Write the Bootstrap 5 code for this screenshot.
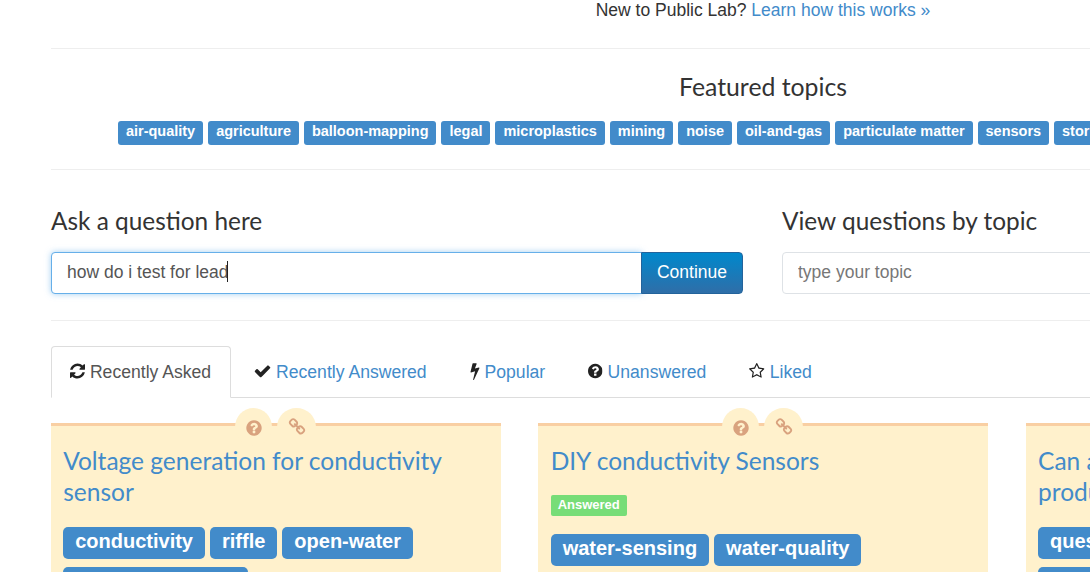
<!DOCTYPE html>
<html lang="en">
<head>
    <meta charset="UTF-8">
    <title>Questions | Public Lab</title>
    <link href="https://cdn.jsdelivr.net/npm/bootstrap@5.3.0/dist/css/bootstrap.min.css" rel="stylesheet">
    <style>
        html, body {
            overflow: hidden;
            height: 572px;
        }
        body {
            font-family: "Liberation Sans", sans-serif;
            font-size: 17.5px;
            color: #333;
        }
        a { text-decoration: none; color: #428bca; }
        .page-wrap {
            width: 1424px;
            margin-left: 51px;
        }
        .intro-line {
            height: 49px;
            line-height: 21px;
            border-bottom: 1px solid #eee;
        }
        .heading-font {
            font-family: Lato, sans-serif;
            font-weight: 400;
            color: #333;
        }
        .featured-block {
            height: 121px;
            padding-top: 24px;
            border-bottom: 1px solid #eee;
        }
        .featured-block h4 {
            font-size: 24.8px;
            line-height: 28px;
            margin-bottom: 20px;
        }
        .topic-tag {
            background: #428bca;
            color: #fff;
            font-weight: 700;
            font-size: 14.47px;
            line-height: 20px;
            height: 24px;
            padding: 0 8px;
            border-radius: 3px;
            white-space: nowrap;
        }
        .tag-row { padding-left: 67px; gap: 5px; }
        .ask-block {
            height: 151px;
            padding-top: 36px;
            border-bottom: 1px solid #eee;
        }
        .ask-block h4 {
            font-size: 24.4px;
            line-height: 30px;
            margin-bottom: 16px;
        }
        .ask-col { width: 692px; }
        .topic-col { margin-left: 39px; width: 693px; }
        .ask-input, .topic-input {
            height: 42px;
            font-size: 17.5px;
            padding: 5px 15px 7px;
            color: #555;
            border-radius: 4px;
        }
        .ask-input {
            border-color: #66afe9;
            box-shadow: 0 0 6px rgba(102, 175, 233, .6);
            position: relative;
        }
        .topic-input::placeholder { color: #777; }
        .caret-bar {
            position: absolute;
            left: 177px;
            top: 9px;
            width: 1px;
            height: 21px;
            background: #222;
            z-index: 6;
        }
        .btn-continue {
            width: 102px;
            height: 42px;
            font-size: 17.5px;
            padding: 5px 12px 7px;
            color: #fff;
            background: linear-gradient(#0088cc, #2f6ea8);
            border: 1px solid #23639b;
            border-radius: 0 4px 4px 0;
        }
        .q-tabs { margin-top: 25px; border-bottom: 1px solid #ddd; }
        .q-tabs .nav-link {
            height: 52px;
            padding: 13px 19px 15px 18px;
            line-height: 24px;
            color: #428bca;
            font-size: 17.6px;
            border-radius: 4px 4px 0 0;
            border: 1px solid transparent;
            margin-right: 4px;
            margin-bottom: -1px;
        }
        .q-tabs .nav-link.active {
            color: #555;
            border-color: #ddd #ddd #fff;
            background: #fff;
        }
        .fa-ico {
            display: inline-block;
            height: 18px;
            fill: #222;
            vertical-align: -2px;
        }
        .ico-refresh { width: 15px; }
        .ico-question { width: 14.5px; }
        .ico-check { width: 17px; }
        .ico-bolt { width: 10px; }
        .ico-star { width: 15.5px; }
        .card-grid {
            width: 1462px;
            margin-top: 25px;
            gap: 37.45px;
        }
        .q-card {
            position: relative;
            width: 450px;
            flex: none;
            height: 300px;
            padding: 19px 12px 19px 12.2px;
            background: #fff1cc;
            border-top: 3px solid #f9cfa3;
        }
        .q-bubbles {
            position: absolute;
            top: -18px;
            left: 0;
            right: 1px;
            gap: 5px;
        }
        .q-bubble {
            width: 37px;
            height: 38px;
            border-radius: 50%;
            background: #fff1cc;
            padding-top: 11px;
        }
        .q-bubble svg {
            width: 16px;
            height: 18px;
            fill: #d9a27e;
            display: block;
            margin: 0 auto;
        }
        .q-bubble.link-one { width: 39px; padding-top: 10px; }
        .q-bubble.link-one svg { width: 18px; height: 18px; }
        .q-title {
            font-family: Lato, sans-serif;
            font-size: 24.5px;
            line-height: 31px;
            font-weight: 400;
            margin-bottom: 20px;
        }
        .q-title a { color: #428bca; }
        .answered-flag {
            display: block;
            width: fit-content;
            background: #77dd77;
            color: #fff;
            font-weight: 700;
            font-size: 13px;
            line-height: 20px;
            height: 21px;
            padding: 0 7px;
            border-radius: 2px;
            margin-top: -1px;
            margin-bottom: 18px;
        }
        .q-tag {
            background: #428bca;
            color: #fff;
            font-weight: 700;
            font-size: 20px;
            line-height: 28px;
            height: 32px;
            padding: 0 12px;
            border-radius: 5px;
            white-space: nowrap;
        }
        .q-tags { gap: 8px 5px; }
    </style>
</head>
<body>
    <svg class="d-none">
        <symbol id="i-refresh" viewBox="128 0 1536 1792"><path d="M1639 1056q0 5-1 7-64 268-268 434.5t-478 166.5q-146 0-282.5-55t-243.5-157l-129 129q-19 19-45 19t-45-19-19-45v-448q0-26 19-45t45-19h448q26 0 45 19t19 45-19 45l-137 137q71 66 161 102t187 36q134 0 250-65t186-179q11-17 53-117 8-23 30-23h192q13 0 22.5 9.5t9.5 22.5zm25-800v448q0 26-19 45t-45 19h-448q-26 0-45-19t-19-45 19-45l138-138q-148-137-349-137-134 0-250 65t-186 179q-11 17-53 117-8 23-30 23h-199q-13 0-22.5-9.5t-9.5-22.5v-7q65-268 270-434.5t480-166.5q146 0 284 55.5t245 156.5l130-129q19-19 45-19t45 19 19 45z"/></symbol>
        <symbol id="i-check" viewBox="96 0 1600 1792"><path d="M1671 566q0 40-28 68l-724 724-136 136q-28 28-68 28t-68-28l-136-136-362-362q-28-28-28-68t28-68l136-136q28-28 68-28t68 28l294 295 656-657q28-28 68-28t68 28l136 136q28 28 28 68z"/></symbol>
        <symbol id="i-bolt" viewBox="400 0 1000 1792"><path d="M1333 566q18 20 7 44l-540 1157q-13 25-42 25-4 0-14-2-17-5-25.5-19t-4.5-30l197-808-406 101q-4 1-12 1-18 0-31-11-18-15-13-39l201-825q4-14 16-23t28-9h328q19 0 32 12.5t13 29.5q0 8-5 18l-171 463 396-98q8-2 12-2 19 0 34 15z"/></symbol>
        <symbol id="i-question" viewBox="128 0 1536 1792"><path d="M1024 1376v-192q0-14-9-23t-23-9h-192q-14 0-23 9t-9 23v192q0 14 9 23t23 9h192q14 0 23-9t9-23zm256-672q0-88-55.5-163t-138.5-116-170-41q-243 0-371 213-15 24 8 42l132 100q7 6 19 6 16 0 25-12 53-68 86-92 34-24 86-24 48 0 85.5 26t37.5 59q0 38-20 61t-68 45q-63 28-115.5 86.5t-52.5 125.5v36q0 14 9 23t23 9h192q14 0 23-9t9-23q0-19 21.5-49.5t54.5-49.5q32-18 49-28.5t46-35 44.5-48 28-60.5 12.5-81zm384 192q0 209-103 385.5t-279.5 279.5-385.5 103-385.5-103-279.5-279.5-103-385.5 103-385.5 279.5-279.5 385.5-103 385.5 103 279.5 279.5 103 385.5z"/></symbol>
        <symbol id="i-star" viewBox="64 0 1664 1792"><path d="M1201 1004l306-297-422-62-189-382-189 382-422 62 306 297-73 421 378-199 377 199zm527-357q0 22-26 48l-363 354 86 500q1 7 1 20 0 50-41 50-19 0-40-12l-449-236-449 236q-22 12-40 12-21 0-31.5-14.5t-10.5-35.5q0-6 2-20l86-500-364-354q-25-27-25-48 0-37 56-46l502-73 225-455q19-41 49-41t49 41l225 455 502 73q56 9 56 46z"/></symbol>
        <symbol id="i-link" viewBox="0 0 1792 1792"><path d="M1520 1216q0-40-28-68l-208-208q-28-28-68-28-42 0-72 32 3 3 19 18.5t21.5 21.5 15 19 13 25.5 3.5 27.5q0 40-28 68t-68 28q-15 0-27.5-3.5t-25.5-13-19-15-21.5-21.5-18.5-19q-33 31-33 73 0 40 28 68l206 207q27 27 68 27 40 0 68-26l147-146q28-28 28-67zm-703-705q0-40-28-68l-206-207q-28-28-68-28-39 0-68 27l-147 146q-28 28-28 67 0 40 28 68l208 208q27 27 68 27 42 0 72-31-3-3-19-18.5t-21.5-21.5-15-19-13-25.5-3.5-27.5q0-40 28-68t68-28q15 0 27.5 3.5t25.5 13 19 15 21.5 21.5 18.5 19q33-31 33-73zm895 705q0 120-85 203l-147 146q-83 83-203 83-121 0-204-85l-206-207q-83-83-83-203 0-123 88-209l-88-88q-86 88-208 88-120 0-204-84l-208-208q-84-84-84-204t85-203l147-146q83-83 203-83 121 0 204 85l206 207q83 83 83 203 0 123-88 209l88 88q86-88 208-88 120 0 204 84l208 208q84 84 84 204z"/></symbol>
    </svg>

    <div class="page-wrap">
        <div class="intro-line text-center">New to Public Lab? <a href="#">Learn how this works »</a></div>

        <!-- Featured topics -->
        <div class="featured-block">
            <h4 class="heading-font text-center">Featured topics</h4>
            <div class="d-flex tag-row">
                <a class="topic-tag" href="#">air-quality</a>
                <a class="topic-tag" href="#">agriculture</a>
                <a class="topic-tag" href="#">balloon-mapping</a>
                <a class="topic-tag" href="#">legal</a>
                <a class="topic-tag" href="#">microplastics</a>
                <a class="topic-tag" href="#">mining</a>
                <a class="topic-tag" href="#">noise</a>
                <a class="topic-tag" href="#">oil-and-gas</a>
                <a class="topic-tag" href="#">particulate matter</a>
                <a class="topic-tag" href="#">sensors</a>
                <a class="topic-tag" href="#">stormwater</a>
            </div>
        </div>

        <!-- Ask + topic search -->
        <div class="ask-block d-flex">
            <div class="ask-col">
                <h4 class="heading-font">Ask a question here</h4>
                <div class="input-group position-relative">
                    <input type="text" class="form-control ask-input" value="how do i test for lead">
                    <span class="caret-bar"></span>
                    <button class="btn btn-continue" type="button">Continue</button>
                </div>
            </div>
            <div class="topic-col">
                <h4 class="heading-font">View questions by topic</h4>
                <input type="text" class="form-control topic-input" placeholder="type your topic">
            </div>
        </div>

        <!-- Tabs -->
        <ul class="nav nav-tabs q-tabs">
            <li class="nav-item"><a class="nav-link active" href="#"><svg class="fa-ico ico-refresh"><use href="#i-refresh"/></svg> Recently Asked</a></li>
            <li class="nav-item"><a class="nav-link" href="#"><svg class="fa-ico ico-check"><use href="#i-check"/></svg> Recently Answered</a></li>
            <li class="nav-item"><a class="nav-link" href="#"><svg class="fa-ico ico-bolt"><use href="#i-bolt"/></svg> Popular</a></li>
            <li class="nav-item"><a class="nav-link" href="#"><svg class="fa-ico ico-question"><use href="#i-question"/></svg> Unanswered</a></li>
            <li class="nav-item"><a class="nav-link" href="#"><svg class="fa-ico ico-star"><use href="#i-star"/></svg> Liked</a></li>
        </ul>

        <!-- Question cards -->
        <div class="d-flex card-grid">
            <div class="q-card">
                <div class="q-bubbles d-flex justify-content-center">
                    <div class="q-bubble"><svg><use href="#i-question"/></svg></div>
                    <div class="q-bubble link-one"><svg><use href="#i-link"/></svg></div>
                </div>
                <h4 class="q-title"><a href="#">Voltage generation for conductivity sensor</a></h4>
                <div class="d-flex flex-wrap q-tags">
                    <a class="q-tag" href="#">conductivity</a>
                    <a class="q-tag" href="#">riffle</a>
                    <a class="q-tag" href="#">open-water</a>
                    <a class="q-tag" href="#">soft-conductivity</a>
                </div>
            </div>
            <div class="q-card">
                <div class="q-bubbles d-flex justify-content-center">
                    <div class="q-bubble"><svg><use href="#i-question"/></svg></div>
                    <div class="q-bubble link-one"><svg><use href="#i-link"/></svg></div>
                </div>
                <h4 class="q-title"><a href="#">DIY conductivity Sensors</a></h4>
                <span class="answered-flag">Answered</span>
                <div class="d-flex flex-wrap q-tags">
                    <a class="q-tag" href="#">water-sensing</a>
                    <a class="q-tag" href="#">water-quality</a>
                </div>
            </div>
            <div class="q-card">
                <div class="q-bubbles d-flex justify-content-center">
                    <div class="q-bubble"><svg><use href="#i-question"/></svg></div>
                    <div class="q-bubble link-one"><svg><use href="#i-link"/></svg></div>
                </div>
                <h4 class="q-title"><a href="#">Can a conductivity meter test a water product safely?</a></h4>
                <div class="d-flex flex-wrap q-tags">
                    <a class="q-tag" href="#">question:conductivity-meter</a>
                    <a class="q-tag" href="#">water-quality-testing-kits</a>
                </div>
            </div>
        </div>
    </div>

    <script src="https://cdn.jsdelivr.net/npm/bootstrap@5.3.0/dist/js/bootstrap.bundle.min.js"></script>
</body>
</html>
